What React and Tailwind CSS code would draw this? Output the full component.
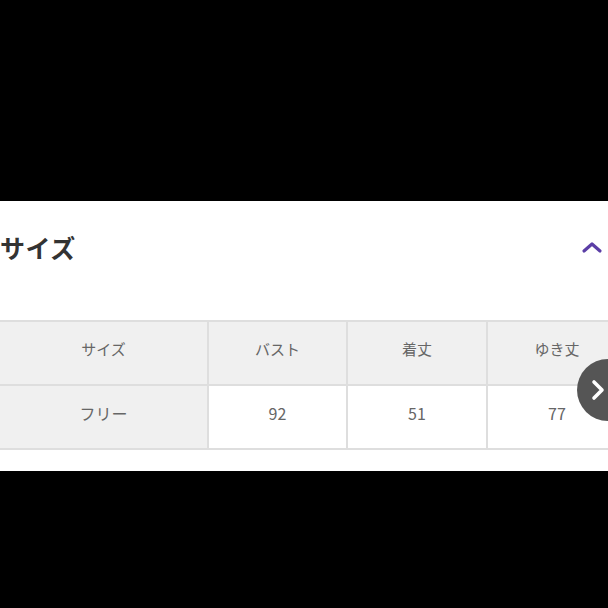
import React from 'react';

const font = { fontFamily: '"Noto Sans CJK JP", "Noto Sans", sans-serif' };

const headers = ['サイズ', 'バスト', '着丈', 'ゆき丈'];
const values = ['フリー', '92', '51', '77'];
const widths = ['w-[209px]', 'w-[139px]', 'w-[140px]', 'w-[140px]'];

const App = () => {
  return (
    <div className="w-[608px] h-[608px] bg-black flex flex-col overflow-hidden" style={font}>
      <div className="h-[201px] bg-black" />

      <div className="h-[270px] bg-white relative">
        {/* header */}
        <div className="flex items-center justify-between h-[46px] mt-[23px] pr-[5px]">
          <h2 className="text-[25px] font-bold text-[#333] leading-none tracking-[0.5px]">サイズ</h2>
          <svg width="22" height="14" viewBox="0 0 22 14" fill="none">
            <path d="M3 11 L11 4 L19 11" stroke="#5b3ea6" strokeWidth="3.2" strokeLinecap="round" strokeLinejoin="round" />
          </svg>
        </div>

        {/* table */}
        <div className="relative mt-[50px] overflow-hidden">
          <div className="flex flex-col border-t-2 border-[#dedede] w-[700px]">
            <div className="flex border-b-2 border-[#dedede]">
              {headers.map((h, i) => (
                <div key={h} className={`${widths[i]} h-[62px] pb-[8px] bg-[#f0f0f0] border-r-2 border-[#dedede] flex items-center justify-center text-[15px] text-[#666]`}>
                  {h}
                </div>
              ))}
            </div>
            <div className="flex border-b-2 border-[#dedede]">
              {values.map((v, i) => (
                <div key={v} className={`${widths[i]} h-[62px] pb-[8px] ${i === 0 ? 'bg-[#f0f0f0]' : 'bg-white'} border-r-2 border-[#dedede] flex items-center justify-center text-[16px] text-[#666]`}>
                  {v}
                </div>
              ))}
            </div>
          </div>

          {/* scroll button */}
          <div className="absolute top-[39px] left-[577px] w-[62px] h-[62px] rounded-full bg-[#555] flex items-center pl-[14px]">
            <svg width="14" height="22" viewBox="0 0 14 22" fill="none">
              <path d="M3 3 L11 11 L3 19" stroke="#fff" strokeWidth="3.6" strokeLinecap="round" strokeLinejoin="round" />
            </svg>
          </div>
        </div>
      </div>

      <div className="flex-1 bg-black" />
    </div>
  );
};

export default App;
